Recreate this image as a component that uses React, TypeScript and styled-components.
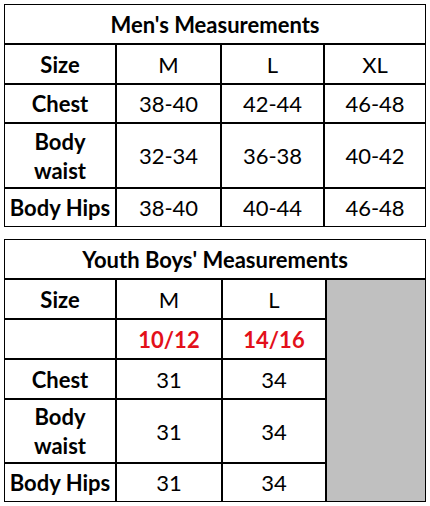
import React from 'react';
import styled, {createGlobalStyle} from 'styled-components';

const Global = createGlobalStyle`
  html, body {
    margin: 0;
    padding: 0;
    background: #fff;
  }
  body {
    font-family: Lato, "Open Sans", sans-serif;
    color: #000;
  }
`

const Page = styled.div`
  display: flex;
  flex-direction: column;
  gap: 12px;
  padding: 4px;
  width: 422px;
`

const Table = styled.div<{ cols: string; rows: string }>`
  display: grid;
  grid-template-columns: ${props => props.cols};
  grid-template-rows: ${props => props.rows};
  gap: 2px;
  padding: 1px;
  background: #000;
`

const Cell = styled.div<{ $bold?: boolean; $red?: boolean; $wide?: boolean }>`
  display: flex;
  align-items: center;
  justify-content: center;
  text-align: center;
  background: #fff;
  font-size: 22px;
  line-height: 29px;
  font-weight: ${props => (props.$bold || props.$red) ? 700 : 400};
  color: ${props => props.$red ? '#e3101a' : '#000'};
  grid-column: ${props => props.$wide ? '1 / -1' : 'auto'};
`

const Filler = styled.div<{ $span: number }>`
  grid-column: 4;
  grid-row: 2 / span ${props => props.$span};
  background: #c0c0c0;
`

const mens = [
    {label: 'Chest', values: ['38-40', '42-44', '46-48']},
    {label: 'Body\nwaist', values: ['32-34', '36-38', '40-42']},
    {label: 'Body Hips', values: ['38-40', '40-44', '46-48']},
]

const youth = [
    {label: 'Chest', values: ['31', '34']},
    {label: 'Body\nwaist', values: ['31', '34']},
    {label: 'Body Hips', values: ['31', '34']},
]

const Label = ({text}: { text: string }) => (
    <Cell $bold>
        <span>{text.split('\n').map((t, i) => <React.Fragment key={i}>{i > 0 && <br/>}{t}</React.Fragment>)}</span>
    </Cell>
)

export default function App() {
    return (
        <>
            <Global/>
            <Page>
                <Table cols="110px 103px 101px 100px" rows="38px 38px 37px 63px 37px">
                    <Cell $bold $wide>Men's Measurements</Cell>
                    <Cell $bold>Size</Cell>
                    <Cell>M</Cell>
                    <Cell>L</Cell>
                    <Cell>XL</Cell>
                    {mens.map(r => (
                        <React.Fragment key={r.label}>
                            <Label text={r.label}/>
                            {r.values.map((v, i) => <Cell key={i}>{v}</Cell>)}
                        </React.Fragment>
                    ))}
                </Table>
                <Table cols="110px 104px 102px 98px" rows="38px 38px 38px 38px 62px 37px">
                    <Cell $bold $wide>Youth Boys' Measurements</Cell>
                    <Cell $bold>Size</Cell>
                    <Cell>M</Cell>
                    <Cell>L</Cell>
                    <Filler $span={5}/>
                    <Cell/>
                    <Cell $red>10/12</Cell>
                    <Cell $red>14/16</Cell>
                    {youth.map(r => (
                        <React.Fragment key={r.label}>
                            <Label text={r.label}/>
                            {r.values.map((v, i) => <Cell key={i}>{v}</Cell>)}
                        </React.Fragment>
                    ))}
                </Table>
            </Page>
        </>
    )
}
